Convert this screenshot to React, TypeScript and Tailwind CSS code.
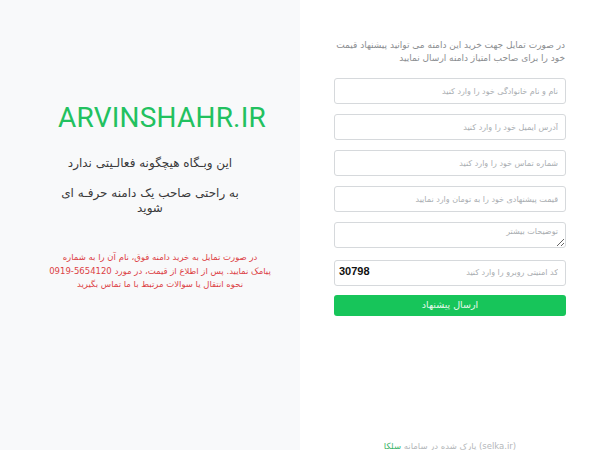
import React from 'react'

const fa = { fontFamily: '"DejaVu Sans", sans-serif' }

function Field({ placeholder }: { placeholder: string }) {
  return (
    <input
      dir="rtl"
      placeholder={placeholder}
      className="h-[26px] w-full rounded-[3px] border border-[#d6d9dc] bg-white px-[7px] text-[8px] text-[#495057] outline-none placeholder:text-[#a9adb1]"
    />
  )
}

export default function App() {
  return (
    <div className="flex h-[450px] w-[600px] overflow-hidden bg-white" style={fa}>
      {/* left: domain info */}
      <div className="flex w-[300px] flex-col items-center bg-[#f8f9fa] pt-[101px]">
        <h1
          className="ml-[24px] text-[28px] leading-[34px] tracking-[0.2px] text-[#22c15f]"
          style={{ fontFamily: 'Roboto, "Liberation Sans", sans-serif' }}
        >
          ARVINSHAHR.IR
        </h1>
        <p dir="rtl" className="mt-[20px] whitespace-nowrap text-center text-[12px] leading-[16px] text-[#3a3a3a]">
          این وبـگاه هیچگونه فعالـیتی ندارد
        </p>
        <p dir="rtl" className="mt-[15px] whitespace-nowrap text-center text-[12px] leading-[15px] text-[#3a3a3a]">
          به راحتی صاحب یک دامنه حرفـه ای
          <br />
          شوید
        </p>
        <div className="mt-[35px] ml-[20px] flex w-[204px] flex-col items-center whitespace-nowrap text-[8.5px] leading-[13.5px] text-[#dc3f45]">
          <p dir="rtl">در صورت تمایل به خرید دامنه فوق، نام آن را به شماره</p>
          <p className="flex gap-[3px]">
            <span>0919-5654120</span>
            <span dir="rtl">پیامک نمایید. پس از اطلاع از قیمت، در مورد</span>
          </p>
          <p dir="rtl">نحوه انتقال یا سوالات مرتبط با ما تماس بگیرید</p>
        </div>
      </div>

      {/* right: offer form */}
      <div className="flex flex-1 flex-col items-center">
        <div className="flex w-[232px] flex-col pt-[39px]">
          <p dir="rtl" className="whitespace-nowrap px-[1px] text-[9px] leading-[13px] text-[#8a8d90]">
            در صورت تمایل جهت خرید این دامنه می توانید پیشنهاد قیمت
            <br />
            خود را برای صاحب امتیاز دامنه ارسال نمایید
          </p>
          <div className="mt-[13px] flex flex-col gap-[10px]">
            <Field placeholder="نام و نام خانوادگی خود را وارد کنید" />
            <Field placeholder="آدرس ایمیل خود را وارد کنید" />
            <Field placeholder="شماره تماس خود را وارد کنید" />
            <Field placeholder="قیمت پیشنهادی خود را به تومان وارد نمایید" />
            <textarea
              placeholder="توضیحات بیشتر"
              className="block h-[26px] min-h-[26px] w-full rounded-[3px] border border-[#d6d9dc] bg-white px-[7px] pt-[3px] text-right text-[8px] leading-[12px] text-[#495057] outline-none placeholder:text-[#a9adb1]"
            />
            <div className="relative">
              <Field placeholder="کد امنیتی روبرو را وارد کنید" />
              <span
                className="absolute left-[5px] top-[6px] text-[11px] font-bold leading-[14px] text-[#111]"
                style={{ fontFamily: '"Liberation Sans", Arial, sans-serif' }}
              >
                30798
              </span>
            </div>
          </div>
          <button className="mt-[9px] h-[21px] w-full rounded-[3px] bg-[#17c55a] text-[9.5px] text-[#e6f9ec]">
            ارسال پیشنهاد
          </button>
        </div>
        <div className="flex-1" />
        <p className="mb-[-3px] text-[8.5px] leading-[14px] text-[#b4b7ba]">
          پارک شده در سامانه <span className="text-[#3cb46a]">سلکا</span> (selka.ir)
        </p>
      </div>
    </div>
  )
}
